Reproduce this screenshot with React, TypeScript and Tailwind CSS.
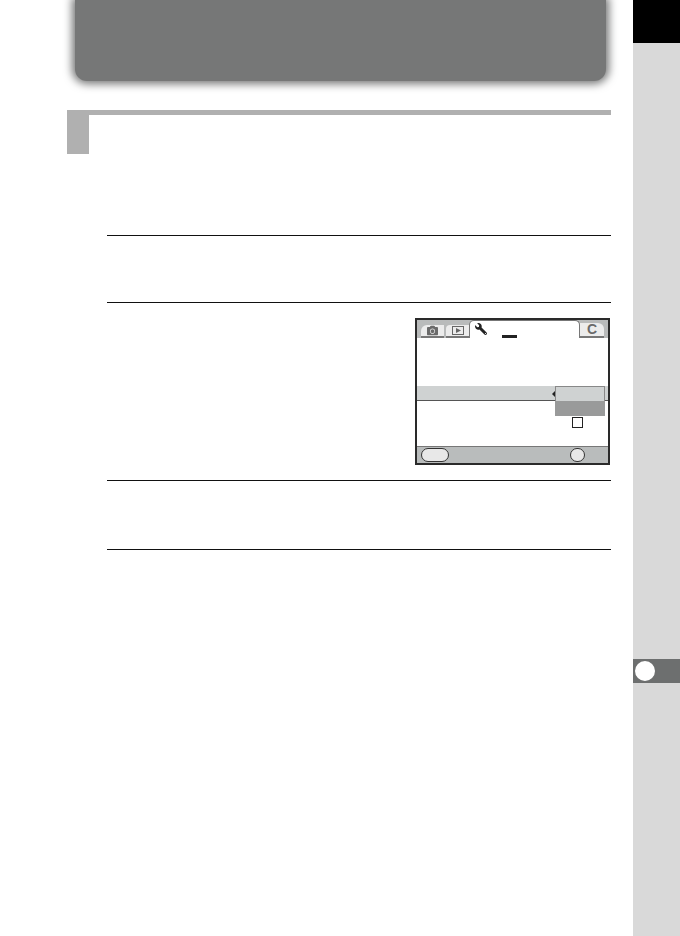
import { FaCamera, FaWrench } from "react-icons/fa";

function CameraScreen() {
  return (
    <div className="relative flex h-[147px] w-[195px] flex-col overflow-hidden border-2 border-[#2a2a2a] bg-white">
      {/* tabs */}
      <div className="flex h-[18px] items-end bg-[#b9bbbb] pl-[4px]">
        <div className="flex h-[13px] w-[23px] items-center justify-center rounded-tl-[6px] border-b-2 border-[#777] bg-[#ececec]">
          <FaCamera className="h-[11px] w-[13px] text-[#6a6a6a]" />
        </div>
        <div className="ml-[2px] flex h-[13px] w-[23px] items-center justify-center rounded-tl-[4px] border-b-2 border-[#777] bg-[#ececec]">
          <svg width="12" height="9" viewBox="0 0 12 9">
            <rect x="0.5" y="0.5" width="11" height="8" fill="none" stroke="#666" />
            <path d="M4 2 L9 4.5 L4 7 Z" fill="#666" />
          </svg>
        </div>
        <div className="relative h-[18px] w-[111px] rounded-t-[5px] border-x border-t border-[#777] bg-white">
          <FaWrench className="absolute left-[5px] top-[2px] h-[12px] w-[12px] -scale-x-100 text-[#222]" />
          <div className="absolute bottom-0 left-[32px] h-[3px] w-[15px] bg-[#222]" />
        </div>
        <div className="flex h-[15px] w-[24px] items-center justify-center rounded-tr-[6px] border-b-2 border-[#777] bg-[#ececec] font-['Liberation_Sans',sans-serif] text-[14px] font-bold text-[#6a6a6a]">
          C
        </div>
      </div>
      {/* menu rows */}
      <div className="flex-1 pt-[48px]">
        <div className="relative h-[15px] border-b border-[#555] bg-[#cfd2d2]">
          <div className="absolute right-[53px] top-[5px] h-0 w-0 border-y-[3px] border-r-[3px] border-y-transparent border-r-[#222]" />
        </div>
        <div className="flex justify-end pr-[25px] pt-[16px]">
          <div className="h-[11px] w-[11px] border border-[#222] bg-white" />
        </div>
      </div>
      {/* popup */}
      <div className="absolute left-[138px] top-[66px] w-[50px]">
        <div className="h-[15px] border-x border-t border-[#888] bg-[#cfd2d2]" />
        <div className="h-[15px] bg-[#999a9a]" />
      </div>
      {/* footer */}
      <div className="flex h-[17px] items-center justify-between border-t border-[#777] bg-[#b9bcbc] pl-[4px] pr-[23px]">
        <div className="h-[14px] w-[28px] rounded-full border border-[#333] bg-[#e8e8e8]" />
        <div className="h-[14px] w-[15px] rounded-full border border-[#333] bg-[#e8e8e8]" />
      </div>
    </div>
  );
}

export default function App() {
  return (
    <div className="flex h-[936px] w-[680px] overflow-hidden bg-white">
      <div className="flex-1 pr-[22px]">
        <div className="ml-[75px] mr-[5px] h-[81px] rounded-b-[12px] bg-[#767777] shadow-[0_0_8px_3px_#767777]" />

        <div className="ml-[67px] mt-[29px] h-[44px] border-t-[5px] border-[#b0b0b0]">
          <div className="h-[39px] w-[22px] bg-[#b0b0b0]" />
        </div>

        <div className="ml-[107px] mt-[81px]">
          <div className="h-[67px] border-t border-[#111]" />
          <div className="flex h-[178px] justify-end border-t border-[#111] pr-px pt-[15px]">
            <CameraScreen />
          </div>
          <div className="h-[69px] border-t border-[#111]" />
          <div className="border-t border-[#111]" />
        </div>
      </div>

      <div className="flex w-[47px] flex-col bg-[#d9d9d9]">
        <div className="h-[43px] bg-black" />
        <div className="relative mt-[616px] h-[24px] bg-[#6d6f6f]">
          <div className="absolute left-0 top-0 h-[24px] w-[24px] rounded-full border-[2.5px] border-[#6d6f6f] bg-white" />
        </div>
      </div>
    </div>
  );
}
